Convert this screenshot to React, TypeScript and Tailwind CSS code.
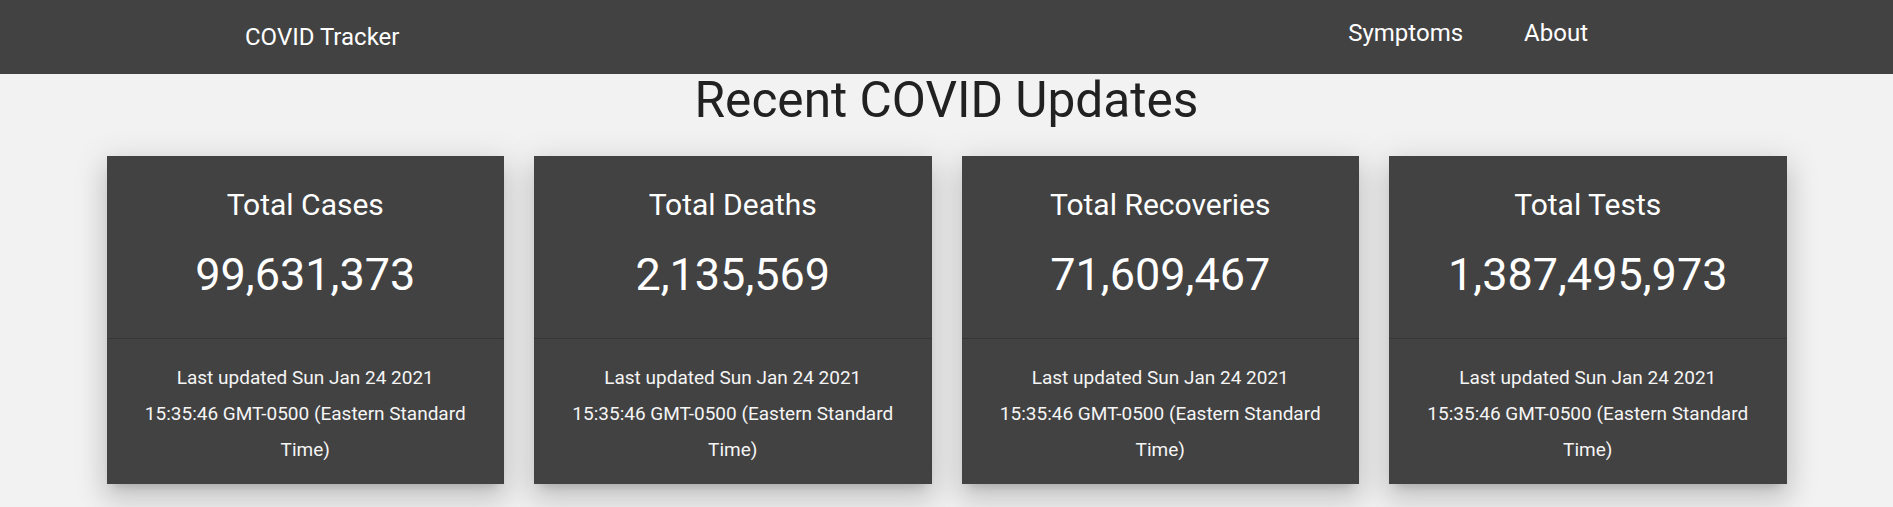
import React from 'react';

interface StatCardProps {
  title: string;
  value: string;
  updated: string;
}

const StatCard: React.FC<StatCardProps> = ({ title, value, updated }) => {
  return (
    <div className="bg-[#424242] text-white text-center shadow-[0_16px_24px_2px_rgba(0,0,0,0.1),0_6px_30px_5px_rgba(0,0,0,0.1),0_8px_10px_-7px_rgba(0,0,0,0.2)]">
      <div className="pt-[31px] pb-[36px] h-[182px]">
        <h2 className="text-[30px] leading-[36px]">{title}</h2>
        <p className="mt-[25px] text-[45px] leading-[54px]">{value}</p>
      </div>
      <div className="border-t border-[#363636] px-[34px] pt-[21px] pb-[16px] text-[19px] leading-[36px] text-[#f5f5f5]">
        {updated}
      </div>
    </div>
  );
};

const stats = [
  { title: 'Total Cases', value: '99,631,373' },
  { title: 'Total Deaths', value: '2,135,569' },
  { title: 'Total Recoveries', value: '71,609,467' },
  { title: 'Total Tests', value: '1,387,495,973' },
];

const lastUpdated = 'Last updated Sun Jan 24 2021 15:35:46 GMT-0500 (Eastern Standard Time)';

export default function App() {
  return (
    <div className="min-h-screen bg-[#f2f2f2] font-['Roboto',sans-serif]">
      <nav className="h-[74px] bg-[#424242] text-white flex items-start justify-between pl-[245px] pr-[305px]">
        <a className="pt-[23px] text-[24px] leading-[28px]">COVID Tracker</a>
        <div className="flex gap-[61px] pt-[19px] text-[24px] leading-[28px]">
          <a>Symptoms</a>
          <a>About</a>
        </div>
      </nav>

      <h1 className="text-center text-[49.6px] leading-[52px] text-[#212121]">Recent COVID Updates</h1>

      <div className="w-[1680px] mx-auto mt-[30px] grid grid-cols-4 gap-[30px]">
        {stats.map((s) => (
          <StatCard key={s.title} title={s.title} value={s.value} updated={lastUpdated} />
        ))}
      </div>
    </div>
  );
}
